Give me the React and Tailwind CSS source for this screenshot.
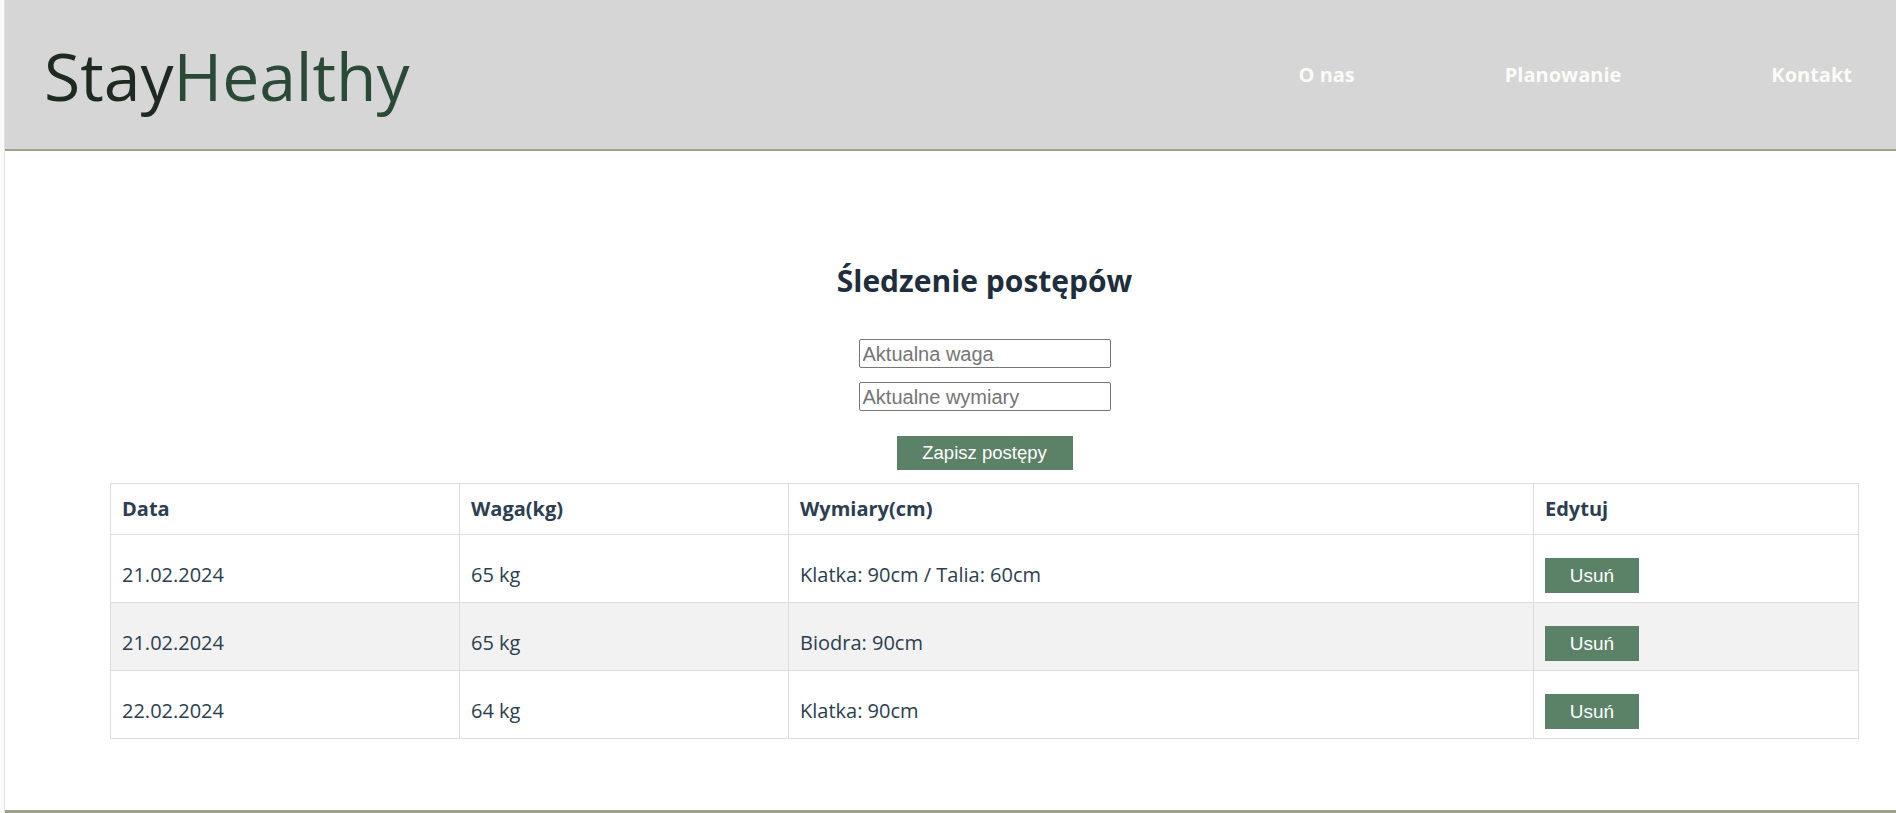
import { useState } from "react";

const initialEntries = [
  { id: 1, date: "21.02.2024", weight: "65 kg", sizes: "Klatka: 90cm / Talia: 60cm" },
  { id: 2, date: "21.02.2024", weight: "65 kg", sizes: "Biodra: 90cm" },
  { id: 3, date: "22.02.2024", weight: "64 kg", sizes: "Klatka: 90cm" },
];

const Header = () => (
  <header className="h-[151px] bg-[#d6d6d6] border-b-2 border-[#a0a08c] flex items-center justify-between pl-[39px] pr-[44px]">
    <h1 className="text-[66px] leading-none font-normal">
      <span className="text-[#1e2a21]">Stay</span>
      <span className="text-[#2a4a37]">Healthy</span>
    </h1>
    <nav className="flex gap-[150px] text-[20px] font-bold text-[#fbfbf7]">
      <a href="#">O nas</a>
      <a href="#">Planowanie</a>
      <a href="#">Kontakt</a>
    </nav>
  </header>
);

export default function App() {
  const [entries, setEntries] = useState(initialEntries);
  const [weight, setWeight] = useState("");
  const [sizes, setSizes] = useState("");

  const removeEntry = (id) => setEntries(entries.filter((e) => e.id !== id));

  return (
    <div
      className="min-h-screen bg-[#fafafa] pl-[4px]"
      style={{ fontFamily: '"Open Sans", "Noto Sans", sans-serif' }}
    >
      <div className="border-l border-[#e2e2e2] bg-white min-h-screen">
        <Header />

        <main className="pl-[105px] pr-[37px] pt-[112px] pb-[71px]">
          <section className="flex flex-col items-center">
            <h2 className="text-[30px] leading-[36px] font-bold text-[#1f2e3d]">
              Śledzenie postępów
            </h2>

            <input
              type="text"
              placeholder="Aktualna waga"
              value={weight}
              onChange={(e) => setWeight(e.target.value)}
              className="mt-[40px] w-[252px] h-[29px] border border-[#767676] rounded-[2px] px-[3px] text-[20px] placeholder:text-[#757575] font-['Liberation_Sans',Arial,sans-serif]"
            />
            <input
              type="text"
              placeholder="Aktualne wymiary"
              value={sizes}
              onChange={(e) => setSizes(e.target.value)}
              className="mt-[14px] w-[252px] h-[29px] border border-[#767676] rounded-[2px] px-[3px] text-[20px] placeholder:text-[#757575] font-['Liberation_Sans',Arial,sans-serif]"
            />

            <button className="mt-[25px] w-[176px] h-[34px] bg-[#5b8267] text-white text-[18.5px] font-['Liberation_Sans',Arial,sans-serif]">
              Zapisz postępy
            </button>

            <table className="mt-[13px] w-full table-fixed border-collapse text-[20px] leading-[30px] text-[#2c3e50]">
              <colgroup>
                <col className="w-[349px]" />
                <col className="w-[329px]" />
                <col className="w-[745px]" />
                <col />
              </colgroup>
              <thead>
                <tr>
                  <th className="border border-[#dddddd] text-left font-bold px-[11px] py-[10px] align-top">Data</th>
                  <th className="border border-[#dddddd] text-left font-bold px-[11px] py-[10px] align-top">Waga(kg)</th>
                  <th className="border border-[#dddddd] text-left font-bold px-[11px] py-[10px] align-top">Wymiary(cm)</th>
                  <th className="border border-[#dddddd] text-left font-bold px-[11px] py-[10px] align-top">Edytuj</th>
                </tr>
              </thead>
              <tbody>
                {entries.map((entry, i) => (
                  <tr key={entry.id} className={i % 2 === 1 ? "bg-[#f2f2f2]" : "bg-white"}>
                    <td className="border border-[#dddddd] px-[11px] pt-[25px] pb-[8px] align-top">{entry.date}</td>
                    <td className="border border-[#dddddd] px-[11px] pt-[25px] pb-[8px] align-top">{entry.weight}</td>
                    <td className="border border-[#dddddd] px-[11px] pt-[25px] pb-[8px] align-top">{entry.sizes}</td>
                    <td className="border border-[#dddddd] px-[11px] pt-[23px] pb-[9px] align-top">
                      <button
                        onClick={() => removeEntry(entry.id)}
                        className="block w-[94px] h-[35px] bg-[#5b8267] text-white text-[19px] leading-none font-['Liberation_Sans',Arial,sans-serif]"
                      >
                        Usuń
                      </button>
                    </td>
                  </tr>
                ))}
              </tbody>
            </table>
          </section>
        </main>

        <footer className="border-t-[3px] border-[#a0a08c] bg-[#d6d6d6] h-[80px]" />
      </div>
    </div>
  );
}
